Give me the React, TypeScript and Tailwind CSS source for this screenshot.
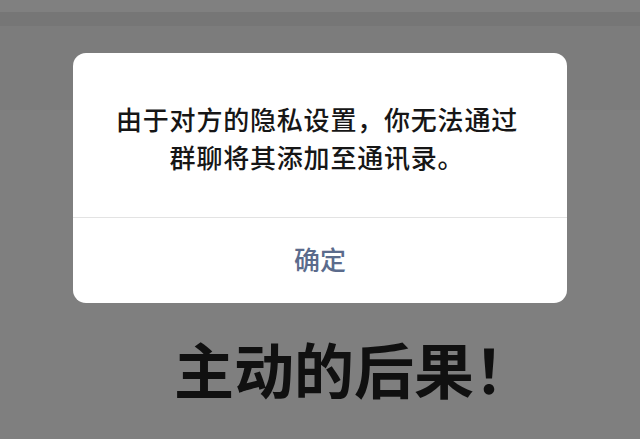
export default function App() {
  return (
    <div
      className="w-[640px] h-[439px] overflow-hidden flex flex-col bg-[linear-gradient(to_bottom,#808080_0px,#808080_12px,#767676_12px,#767676_26px,#7c7c7c_26px,#7c7c7c_110px,#7f7f7f_110px,#7f7f7f_100%)]"
      style={{ fontFamily: '"Noto Sans CJK SC", "Noto Sans", sans-serif' }}
    >
      <div className="h-[53px] shrink-0" />

      {/* Dialog */}
      <div className="mx-[73px] w-[494px] h-[250px] shrink-0 bg-white rounded-[13px] flex flex-col">
        <div className="h-[164px] flex flex-col items-center justify-center pt-[5px] pr-[6px] text-[26px] leading-[38px] text-[#161616] tracking-[0.8px] font-medium">
          <p>由于对方的隐私设置，你无法通过</p>
          <p>群聊将其添加至通讯录。</p>
        </div>
        <div className="h-px bg-[#e3e3e3]" />
        <div className="flex-1 flex items-center justify-center text-[26px] text-[#5b6b8c] font-medium pb-[4px]">
          确定
        </div>
      </div>

      {/* Caption */}
      <div className="flex-1 flex items-center justify-center pb-[7px] pl-[68px]">
        <p className="text-[60px] font-bold text-[#101010] leading-none">主动的后果！</p>
      </div>
    </div>
  );
}
